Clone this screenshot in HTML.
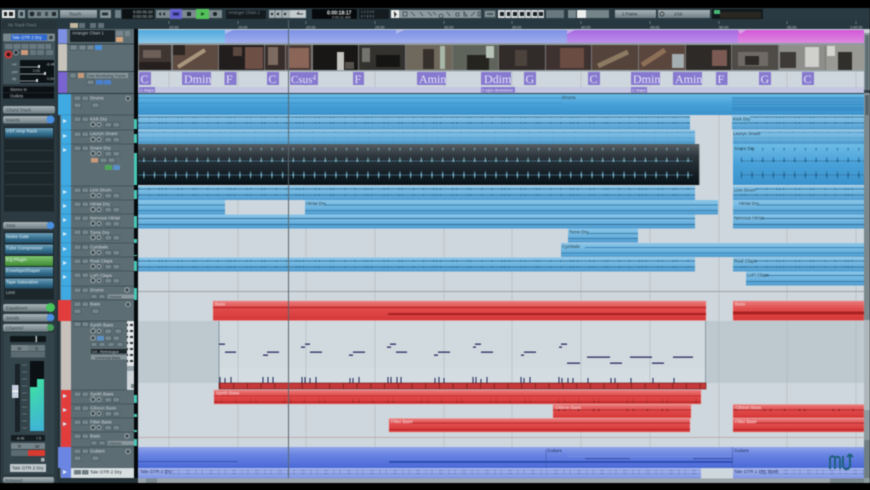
<!DOCTYPE html>
<html lang="en"><head><meta charset="utf-8"><title>Cubase</title>
<style>
html,body{margin:0;padding:0;background:#000;width:870px;height:490px;overflow:hidden}
svg{display:block;position:absolute;left:0;top:0;filter:blur(.45px)}
text{font-family:"Liberation Sans",sans-serif;font-size:4.6px;fill:#d5dcdf}
.d{fill:#26424f}.w{fill:#f2f5f5}.k{fill:#15242c}
.c{font-family:"Liberation Serif",serif;font-size:12px;fill:#e4e5f8}
.cb{fill:#8679cf}
.r{font-size:4.2px;fill:#b8c4c8}
.b{fill:#75868c;stroke:#2f3d43;stroke-width:.4}
.g{fill:#8a999e}
.n{fill:#2b2a60}
.v{fill:#26305e}
</style></head><body>
<svg width="870" height="490" viewBox="0 0 870 490" xmlns="http://www.w3.org/2000/svg">
<defs>
<linearGradient id="bl" x1="0" y1="0" x2="0" y2="1"><stop offset="0" stop-color="#8bc5e8"/><stop offset=".5" stop-color="#6fb5e0"/><stop offset="1" stop-color="#4f9cd0"/></linearGradient>
<linearGradient id="bd" x1="0" y1="0" x2="0" y2="1"><stop offset="0" stop-color="#6dbbe6"/><stop offset=".5" stop-color="#47a0d8"/><stop offset="1" stop-color="#3b93cd"/></linearGradient>
<linearGradient id="sn" x1="0" y1="0" x2="0" y2="1"><stop offset="0" stop-color="#565f64"/><stop offset=".3" stop-color="#2c363c"/><stop offset="1" stop-color="#071218"/></linearGradient>
<linearGradient id="rd" x1="0" y1="0" x2="0" y2="1"><stop offset="0" stop-color="#ea7c7c"/><stop offset=".4" stop-color="#e04c4c"/><stop offset="1" stop-color="#d63636"/></linearGradient>
<linearGradient id="gu" x1="0" y1="0" x2="0" y2="1"><stop offset="0" stop-color="#8fa3ea"/><stop offset=".35" stop-color="#6a85e2"/><stop offset="1" stop-color="#4a6ad6"/></linearGradient>
<linearGradient id="gu2" x1="0" y1="0" x2="0" y2="1"><stop offset="0" stop-color="#a9b8ee"/><stop offset="1" stop-color="#7f95e2"/></linearGradient>
<linearGradient id="btn" x1="0" y1="0" x2="0" y2="1"><stop offset="0" stop-color="#a8b3b7"/><stop offset="1" stop-color="#6f7e84"/></linearGradient>
<linearGradient id="slot" x1="0" y1="0" x2="0" y2="1"><stop offset="0" stop-color="#6f9fb7"/><stop offset=".5" stop-color="#3a7595"/><stop offset="1" stop-color="#1f4c66"/></linearGradient>
<linearGradient id="grn" x1="0" y1="0" x2="0" y2="1"><stop offset="0" stop-color="#7fc46f"/><stop offset="1" stop-color="#3d8a34"/></linearGradient>
<linearGradient id="meter" x1="0" y1="0" x2="0" y2="1"><stop offset="0" stop-color="#3fdca8"/><stop offset="1" stop-color="#3fb4d6"/></linearGradient>
<linearGradient id="arr0" x1="0" y1="0" x2="0" y2="1"><stop offset="0" stop-color="#4fa8dc"/><stop offset="1" stop-color="#8cc8ea"/></linearGradient>
<linearGradient id="arr1" x1="0" y1="0" x2="0" y2="1"><stop offset="0" stop-color="#7c90e6"/><stop offset="1" stop-color="#a2aeee"/></linearGradient>
<linearGradient id="arr2" x1="0" y1="0" x2="0" y2="1"><stop offset="0" stop-color="#a668e2"/><stop offset="1" stop-color="#bd90ea"/></linearGradient>
<linearGradient id="arr3" x1="0" y1="0" x2="0" y2="1"><stop offset="0" stop-color="#d456d8"/><stop offset="1" stop-color="#dd8ae0"/></linearGradient>
<pattern id="tk" width="68.6" height="6" patternUnits="userSpaceOnUse"><path d="M0 3H68.6" stroke="#28688f" stroke-width=".7"/><path d="M2 2v2M12 2v2M22 2v2M25 2v2M29 2v2M41 2v2M45 2v2M56 2v2M59 2v2" stroke="#2a6f9a" stroke-width=".7"/></pattern>
<pattern id="tk2" width="34.3" height="5" patternUnits="userSpaceOnUse"><path d="M0 2.500H34.3" stroke="#3a7fa8" stroke-width=".5"/><path d="M4 2v1M15 2v1M26 2v1" stroke="#2a6a92" stroke-width=".6"/></pattern>
<pattern id="wv" width="10.67" height="14" patternUnits="userSpaceOnUse"><path d="M0 7H10.67" stroke="#4f87a3" stroke-width=".6"/><path d="M4.400 7L5.200 2.500L6 7L5.200 11.500Z" fill="#85bfdb"/></pattern>
<pattern id="wvb" width="10.67" height="14" patternUnits="userSpaceOnUse"><path d="M0 7H10.67" stroke="#2d719a" stroke-width=".6"/><path d="M4.400 7L5.200 2.500L6 7L5.200 11.500Z" fill="#1e5c84"/></pattern>
<pattern id="rt" width="68.6" height="4" patternUnits="userSpaceOnUse"><path d="M0 2H68.6" stroke="#a52525" stroke-width=".8"/><path d="M10 1v2M16 1v2M30 1v2M45 1v2M50 1v2" stroke="#7d1a1a" stroke-width="1"/></pattern>
<pattern id="rb" width="13.72" height="6" patternUnits="userSpaceOnUse"><rect width="13.72" height="6" fill="#c43838"/><path d="M.3 0V6" stroke="#6a1616" stroke-width=".7"/></pattern>
<pattern id="piano" width="30" height="4" patternUnits="userSpaceOnUse"><path d="M0 .5H30M0 2.500H30" stroke="#c8d1d6" stroke-width=".4"/></pattern>
<pattern id="gt" width="23" height="4" patternUnits="userSpaceOnUse"><path d="M0 2H23" stroke="#4660b0" stroke-width=".5"/><path d="M3 1v2M5 1v2M12 1v2M18 1v2" stroke="#3a50a0" stroke-width=".7"/></pattern>
<pattern id="key" width="5" height="6" patternUnits="userSpaceOnUse"><rect width="5" height="6" fill="#e4e8ea"/><rect width="3" height="2" fill="#242a2e"/></pattern>
<g id="t"><rect class="b" x="74" y="2" width="7" height="4.500"/><rect class="b" x="82" y="2" width="6.500" height="4.500"/><circle cx="93" cy="9.500" r="2.200" fill="#3c4a50" stroke="#cfd6d8" stroke-width=".7"/><circle cx="99" cy="9.500" r="1.800" fill="#3c4a50" stroke="#cfd6d8" stroke-width=".6"/><rect class="b" x="105" y="7.500" width="6.500" height="4.500"/><rect class="b" x="113" y="7.500" width="6.500" height="4.500"/><path d="M63 4l4 2-4 2z" fill="#d6eefa"/></g>
<g id="f"><rect class="b" x="74" y="2" width="7" height="4.500"/><rect class="b" x="82" y="2" width="6.500" height="4.500"/><rect class="b" x="74" y="9" width="7" height="4.500"/><rect class="b" x="92" y="9" width="7" height="4.500"/><circle cx="128" cy="4.500" r="2.200" fill="#3c4a50" stroke="#cfd6d8" stroke-width=".7"/></g>
</defs>

<!-- base -->
<rect width="870" height="490" fill="#000"/>
<rect y="8" width="870" height="475" fill="#2c3a41"/>

<!-- toolbar -->
<rect y="8" width="870" height="12" fill="#2a3a42"/>
<rect x="2" y="10" width="13" height="8" fill="#e8ecec"/><rect x="4" y="12" width="3" height="4" fill="#222"/><rect x="9" y="12" width="4" height="4" fill="#222"/>
<rect x="18" y="10" width="7" height="8" fill="#8b9a9f"/><rect x="20" y="12" width="3" height="4" fill="#28353a"/>
<rect x="28" y="10" width="30" height="8" fill="#78878c"/><circle cx="32" cy="14" r="2.400" fill="#20292d"/><rect x="37" y="12" width="4" height="4" fill="#3a474c"/><rect x="45" y="12" width="3" height="4" fill="#3a474c"/><rect x="52" y="12" width="4" height="4" fill="#20292d"/>
<rect x="60" y="10" width="37" height="8" fill="url(#btn)"/><text x="69" y="15.500" style="fill:#2c3a41">Touch</text>
<rect x="100" y="10" width="11" height="8" fill="#87959a"/><rect x="102" y="12.500" width="6" height="3" fill="#28353a"/>
<rect x="115" y="10" width="6" height="8" fill="#6f8088"/>
<rect x="122" y="9" width="32" height="10" fill="#0c1214"/>
<text x="133" y="13.500" class="r">0:00:00.00</text><text x="133" y="18" class="r">0:00:00.00</text>
<rect x="156" y="10" width="14" height="8" fill="#7c8a8f"/><path d="M161 12v4l-2.500-2zM165 12v4l-2.500-2z" fill="#20292d"/>
<rect x="170" y="9" width="12" height="10" fill="#6462cc"/><rect x="173" y="12.500" width="6" height="3" fill="#2a2a70"/>
<rect x="182" y="10" width="14" height="8" fill="#7c8a8f"/><rect x="187" y="12" width="4" height="4" fill="#1a2226"/>
<rect x="196" y="9" width="13" height="10" fill="#53c25a"/><path d="M201 12l4 2-4 2z" fill="#1d5a26"/>
<rect x="209" y="10" width="13" height="8" fill="#7c8a8f"/><circle cx="215" cy="14" r="2" fill="#1a2226"/>
<rect x="226" y="10" width="40" height="9" fill="#141c20"/><text x="228" y="14" class="r" style="fill:#75858b">Arranger Chain 1</text>
<rect x="269" y="10" width="21" height="8" fill="#a1acb0"/><path d="M275 10v8M282 10v8" stroke="#40505a" stroke-width=".5"/><rect x="271" y="13" width="2" height="2" fill="#222"/><rect x="277" y="13" width="2" height="2" fill="#222"/><rect x="284" y="13" width="2" height="2" fill="#222"/>
<rect x="290" y="10" width="16" height="8" fill="#c2cacd"/><path d="M297 14h6M297 14l2-2" stroke="#222" stroke-width=".8" fill="none"/>
<rect x="312" y="9" width="45" height="10" fill="#060a0c"/><text x="327" y="14.500" style="fill:#eef2f2;font-size:5px;font-weight:bold">0:00:18:17</text><text x="332" y="18.500" class="r" style="font-size:3.600px">0:00:11.400</text>
<rect x="359" y="9" width="30" height="10" fill="#141c20"/><text x="361" y="13" class="r" style="fill:#8a999e;font-size:3.400px">1 2 3 4 5</text><text x="361" y="17.500" class="r" style="fill:#8a999e;font-size:3.400px">6 7 8 9 0</text>
<rect x="391" y="10" width="8" height="8" fill="#eef0f0"/><path d="M394 11l3 4-1.500 0 0 2-1 0z" fill="#111"/>
<rect x="399" y="10" width="82" height="8" fill="#8d9ba0"/>
<path d="M403 12h4v4h-4zM411 12l4 4M420 12l3 4M428 12l4 4M433 12l3 3M441 14a2 2 0 1 0 .1 0M447 12l3 4M456 13h3v3h-3zM464 12v4h3zM471 16l4-4M478 12h2v4h-2z" stroke="#3d4a50" fill="none" stroke-width=".8"/>
<rect x="484" y="10" width="12" height="8" fill="#536268"/><rect x="486" y="12" width="8" height="4" fill="none" stroke="#d6dcde" stroke-width=".6"/>
<rect x="498" y="10" width="46" height="8" fill="#d8dddf"/><path d="M505 10v8M511 10v8M518 10v8M525 10v8M531 10v8M538 10v8" stroke="#38454b" stroke-width=".5"/><path d="M500 12h4v4h-4zM507 12h3v4h-3zM513 12h4v4h-4zM520 12h4v4h-4zM527 12h3v4h-3zM533 12h4v4h-4zM539 12h4v4h-4z" fill="#191f22"/>
<rect x="546" y="10" width="18" height="8" fill="#69787e"/>
<rect x="568" y="10" width="8" height="8" fill="#7a898e"/>
<rect x="577" y="10" width="9" height="8" fill="#eef0f0"/>
<rect x="586" y="10" width="23" height="8" fill="#758489"/>
<rect x="615" y="10" width="41" height="8" fill="url(#btn)"/><text x="622" y="15.500" style="fill:#1f2a30;font-size:4.200px">1 Frame</text>
<rect x="658" y="10" width="52" height="8" fill="url(#btn)"/><circle cx="662" cy="14" r="2" fill="none" stroke="#222" stroke-width=".7"/><text x="674" y="15.500" style="fill:#1f2a30;font-size:4.200px">1/16</text>
<rect x="712" y="9" width="51" height="10" fill="#12191c"/><rect x="714" y="10" width="6" height="4" fill="#46b878"/><rect x="720" y="12" width="41" height="6" fill="#2a2620"/>

<!-- ruler -->
<rect y="20" width="870" height="9" fill="#283840"/>
<rect x="0" y="20" width="57" height="9" fill="#27353b"/>
<text x="8" y="26.500" class="r" style="fill:#7c8c92">No Track Fixed</text>
<rect x="70" y="23" width="8" height="5" fill="#c3b89f"/><rect x="79" y="23" width="6" height="5" fill="#607178"/><rect x="90" y="23" width="6" height="5" fill="#607178"/><rect x="98" y="23" width="6" height="5" fill="#607178"/>
<text x="169" y="28.500" class="r" style="font-size:3.800px">10:00</text><text x="238" y="28.500" class="r" style="font-size:3.800px">15:00</text><text x="306" y="28.500" class="r" style="font-size:3.800px">20:00</text><text x="375" y="28.500" class="r" style="font-size:3.800px">25:00</text><text x="444" y="28.500" class="r" style="font-size:3.800px">30:00</text><text x="512" y="28.500" class="r" style="font-size:3.800px">35:00</text><text x="581" y="28.500" class="r" style="font-size:3.800px">40:00</text><text x="650" y="28.500" class="r" style="font-size:3.800px">45:00</text><text x="719" y="28.500" class="r" style="font-size:3.800px">50:00</text><text x="787" y="28.500" class="r" style="font-size:3.800px">55:00</text><text x="850" y="28.500" class="r" style="font-size:3.800px">1:00:00</text>
<path d="M169 21v3M238 21v3M306 21v3M375 21v3M444 21v3M512 21v3M581 21v3M650 21v3M719 21v3M787 21v3M856 21v3" stroke="#a5b2b7" stroke-width=".5"/>

<!-- arrange background -->
<rect x="138" y="29" width="726" height="450" fill="#ced7dd"/>
<path d="M169 71V447M238 71V447M306 71V447M375 71V447M444 71V447M512 71V447M581 71V447M650 71V447M719 71V447M787 71V447M856 71V447" stroke="#b4bec4" stroke-width=".7"/>

<!-- arranger -->
<rect x="138" y="30" width="87" height="13" fill="url(#arr0)"/>
<rect x="225" y="30" width="342" height="13" fill="url(#arr1)"/>
<rect x="567" y="30" width="171" height="13" fill="url(#arr2)"/>
<rect x="738" y="30" width="126" height="13" fill="url(#arr3)"/>
<path d="M225 30h8l-8 4zM396 30h8l-8 4zM567 30h8l-8 4zM738 30h8l-6 4z" fill="#d6d8f2" opacity=".55"/>
<rect x="138" y="43" width="726" height="2" fill="#8f9ca2"/>

<!-- video -->
<rect x="138" y="45" width="726" height="25" fill="#777"/>
<rect x="139" y="45" width="32" height="25" fill="#3f3632"/><rect x="143" y="50" width="18" height="8" fill="#6d5f58"/><rect x="139" y="62" width="32" height="8" fill="#251f1e"/>
<rect x="173" y="45" width="45" height="25" fill="#5d4a40"/><path d="M178 67L205 50" stroke="#a8967c" stroke-width="4"/><rect x="173" y="45" width="12" height="10" fill="#2c2522"/>
<rect x="219" y="45" width="45" height="25" fill="#221e1d"/><rect x="245" y="47" width="18" height="22" fill="#6e4f46"/><rect x="233" y="47" width="9" height="9" fill="#5a4740"/>
<rect x="265" y="45" width="20" height="25" fill="#382d2a"/><rect x="268" y="47" width="10" height="18" fill="#7d6a60"/>
<rect x="286" y="45" width="25" height="25" fill="#4a3a34"/><rect x="289" y="48" width="20" height="20" fill="#8a6558"/>
<rect x="313" y="45" width="45" height="25" fill="#181716"/><rect x="337" y="52" width="7" height="18" fill="#c4c4c0"/><rect x="345" y="62" width="9" height="7" fill="#55504c"/>
<rect x="359" y="45" width="46" height="25" fill="#33322f"/><rect x="362" y="48" width="8" height="14" fill="#74746e"/><rect x="376" y="55" width="24" height="12" fill="#151514"/>
<rect x="406" y="45" width="46" height="25" fill="#6f685c"/><rect x="423" y="49" width="11" height="20" fill="#35302c"/><rect x="440" y="46" width="5" height="23" fill="#a8b8a8"/>
<rect x="453" y="45" width="45" height="25" fill="#5f645a"/><rect x="467" y="55" width="22" height="15" fill="#26241f"/><rect x="486" y="46" width="8" height="12" fill="#b8c4b8"/>
<rect x="499" y="45" width="46" height="25" fill="#312c2a"/><rect x="515" y="50" width="12" height="16" fill="#4d433d"/>
<rect x="546" y="45" width="45" height="25" fill="#3e3230"/><rect x="560" y="48" width="24" height="20" fill="#6a4c42"/>
<rect x="592" y="45" width="46" height="25" fill="#53433a"/><path d="M598 66L628 52" stroke="#8d7a62" stroke-width="5"/>
<rect x="639" y="45" width="46" height="25" fill="#5b463e"/><rect x="672" y="54" width="12" height="14" fill="#a5aeb0"/><path d="M642 65L665 50" stroke="#8e7058" stroke-width="5"/>
<rect x="686" y="45" width="45" height="25" fill="#2e2a28"/><rect x="712" y="50" width="15" height="16" fill="#7a5a52"/>
<rect x="732" y="45" width="46" height="25" fill="#4f4c48"/><rect x="738" y="52" width="30" height="14" fill="#6f6a66"/><rect x="745" y="56" width="14" height="9" fill="#2d2a28"/>
<rect x="779" y="45" width="46" height="25" fill="#8e8e8a"/><rect x="780" y="52" width="16" height="16" fill="#3d3a38"/><rect x="805" y="47" width="14" height="20" fill="#d0d0cc"/>
<rect x="826" y="45" width="38" height="25" fill="#9a9a94"/><rect x="838" y="52" width="14" height="18" fill="#312f2c"/><rect x="827" y="46" width="8" height="10" fill="#d5d5d0"/>

<!-- chord lane -->
<rect x="138" y="70" width="726" height="1.500" fill="#9aa6ac"/>
<rect x="138" y="87" width="726" height="6" fill="#c4c6e2"/>
<rect x="138" y="93" width="726" height="1.200" fill="#28404c"/>
<rect class="cb" x="139" y="72" width="12" height="13"/><text class="c" x="140.500" y="83">C</text>
<rect class="cb" x="182" y="72" width="29" height="13"/><text class="c" x="184" y="83">Dmin</text>
<rect class="cb" x="224.500" y="72" width="12" height="13"/><text class="c" x="226" y="83">F</text>
<rect class="cb" x="267" y="72" width="12" height="13"/><text class="c" x="268.500" y="83">C</text>
<rect class="cb" x="290" y="72" width="28" height="13"/><text class="c" x="291" y="83" style="font-size:11px">Csus<tspan dy="-3" style="font-size:7px">4</tspan></text>
<rect class="cb" x="353" y="72" width="11" height="13"/><text class="c" x="354.500" y="83">F</text>
<rect class="cb" x="417" y="72" width="29" height="13"/><text class="c" x="419" y="83">Amin</text>
<rect class="cb" x="481" y="72" width="30" height="13"/><text class="c" x="484" y="83">Ddim</text>
<rect class="cb" x="524" y="72" width="12" height="13"/><text class="c" x="525.500" y="83">G</text>
<rect class="cb" x="588" y="72" width="12" height="13"/><text class="c" x="589.500" y="83">C</text>
<rect class="cb" x="631" y="72" width="29" height="13"/><text class="c" x="633" y="83">Dmin</text>
<rect class="cb" x="673" y="72" width="29" height="13"/><text class="c" x="675" y="83">Amin</text>
<rect class="cb" x="716" y="72" width="11.500" height="13"/><text class="c" x="717.500" y="83">F</text>
<rect class="cb" x="759" y="72" width="12" height="13"/><text class="c" x="760.500" y="83">G</text>
<rect class="cb" x="802" y="72" width="12" height="13"/><text class="c" x="803.500" y="83">C</text>
<rect class="cb" x="139" y="87" width="16" height="5.500"/><text x="140" y="91.500" style="font-size:4px;fill:#eee">C Major</text>
<rect class="cb" x="481" y="87" width="34" height="5.500"/><text x="482" y="91.500" style="font-size:3.800px;fill:#eee">F sqhz diminished</text>
<rect class="cb" x="631" y="87" width="16" height="5.500"/><text x="632" y="91.500" style="font-size:4px;fill:#eee">C Major</text>

<!-- blue events -->
<rect x="138" y="94" width="726" height="21" fill="url(#bd)"/>
<path d="M138 98H562M138 103H562M138 109H562" stroke="#3d96cf" stroke-width="1"/>
<rect x="732" y="97" width="132" height="14" fill="#2f85bf" opacity=".55"/>
<text x="562" y="99" class="d">Drums</text>
<path d="M732 100H864M732 103H864M732 106H864" stroke="#58a8d8" stroke-width=".7"/>

<g id="ev">
<rect x="138" y="115.500" width="552" height="14" fill="url(#bl)"/><rect x="138" y="116.500" width="552" height="6" fill="url(#tk)"/><rect x="138" y="122.500" width="552" height="6" fill="url(#tk)"/>
<rect x="732" y="115.500" width="132" height="14" fill="url(#bl)"/><rect x="750" y="116.500" width="114" height="6" fill="url(#tk)"/><rect x="732" y="122.500" width="132" height="6" fill="url(#tk)"/><text x="733" y="120.500" class="d">Kick Dry</text>
<rect x="138" y="130" width="557" height="14" fill="url(#bl)"/><rect x="138" y="131" width="557" height="5" fill="url(#tk2)"/><rect x="138" y="137.500" width="557" height="5" fill="url(#tk2)"/>
<rect x="733" y="130" width="131" height="14" fill="url(#bl)"/><rect x="758" y="131" width="106" height="5" fill="url(#tk2)"/><rect x="733" y="137.500" width="131" height="5" fill="url(#tk2)"/><text x="733" y="135" class="d">Lauryn Snare</text>
<rect x="138" y="144" width="562" height="41" fill="url(#sn)"/><rect x="138" y="148" width="555" height="14" fill="url(#wv)"/><rect x="138" y="168" width="555" height="14" fill="url(#wv)"/>
<path d="M699.500 144V185" stroke="#c0c8cc" stroke-width=".8"/>
<rect x="733" y="144" width="131" height="41" fill="url(#bd)"/><rect x="741" y="148" width="123" height="14" fill="url(#wvb)"/><rect x="741" y="168" width="123" height="14" fill="url(#wvb)"/><text x="734" y="150" class="d">Snare Dry</text>
<rect x="138" y="186" width="557" height="14" fill="url(#bl)"/><rect x="138" y="187" width="557" height="6" fill="url(#tk)"/><rect x="138" y="193" width="557" height="6" fill="url(#tk)"/>
<rect x="733" y="186" width="131" height="14" fill="url(#bl)"/><rect x="755" y="187" width="109" height="6" fill="url(#tk)"/><rect x="733" y="193" width="131" height="6" fill="url(#tk)"/><text x="734" y="191.500" class="d">Linn Drum</text>
<rect x="138" y="200" width="87" height="14.500" fill="url(#bl)"/><rect x="305" y="200" width="413" height="14.500" fill="url(#bl)"/><rect x="733" y="200" width="131" height="14.500" fill="url(#bl)"/>
<path d="M138 205H225M138 210.500H225M325 205H718M305 210.500H718M758 205H864M733 210.500H864" stroke="#3a82ad" stroke-width=".9"/><text x="306" y="205" class="d">HiHat Dry</text><text x="739" y="205" class="d">HiHat Dry</text>
<rect x="138" y="214.500" width="557" height="14" fill="url(#bl)"/><rect x="733" y="214.500" width="131" height="14" fill="url(#bl)"/>
<path d="M138 218.500H695M138 224.500H695M762 218.500H864M733 224.500H864" stroke="#1f5e86" stroke-width=".8"/><text x="734" y="219.500" class="d">Nervous HiHat</text>
<rect x="568" y="228.500" width="70" height="14" fill="url(#bl)"/><path d="M587 233.500H638M568 238.500H638" stroke="#2a6c95" stroke-width=".8"/><text x="569" y="233.500" class="d">Toms Dry</text>
<rect x="561" y="243" width="303" height="14" fill="url(#bl)"/><path d="M585 247.500H864M561 253H864" stroke="#3a88b8" stroke-width="1"/><text x="562" y="248" class="d">Cymbals</text>
<rect x="138" y="257.500" width="557" height="14" fill="url(#bl)"/><rect x="138" y="258.500" width="557" height="6" fill="url(#tk)"/><rect x="138" y="264.500" width="557" height="6" fill="url(#tk)"/>
<rect x="733" y="257.500" width="131" height="14" fill="url(#bl)"/><rect x="755" y="258.500" width="109" height="6" fill="url(#tk)"/><rect x="733" y="264.500" width="131" height="6" fill="url(#tk)"/><text x="734" y="262.500" class="d">Real Claps</text>
<rect x="746" y="271.500" width="118" height="14" fill="url(#bl)"/><path d="M765 275.500H864M746 281.500H864" stroke="#2a6c95" stroke-width=".8"/><text x="747" y="276.500" class="d">LoFi Claps</text>
</g>
<rect x="138" y="291" width="726" height="1" fill="#9aa4aa"/>

<!-- red -->
<rect x="213" y="301" width="493" height="19.500" fill="url(#rd)" stroke="#ee9b9b" stroke-width=".5"/>
<path d="M213 307.500H706" stroke="#c63030" stroke-width="2"/><rect x="388" y="313" width="318" height="2" fill="#a82020"/>
<text x="215" y="305.500" style="fill:#f5dede">Bass</text>
<rect x="733" y="301" width="131" height="19.500" fill="url(#rd)" stroke="#ee9b9b" stroke-width=".5"/><rect x="733" y="311.500" width="131" height="3" fill="#a82020"/><text x="735" y="305.500" style="fill:#f5dede">Bass</text>

<!-- piano lane -->
<rect x="138" y="321" width="81" height="62" fill="#bdc9ce"/><rect x="706" y="321" width="158" height="62" fill="#bdc9ce"/>
<rect x="219" y="321" width="487" height="62" fill="#d3dce1"/><rect x="219" y="321" width="487" height="46" fill="url(#piano)"/>
<path d="M169 321V383M238 321V383M306 321V383M375 321V383M444 321V383M512 321V383M581 321V383M650 321V383M719 321V383M787 321V383M856 321V383" stroke="#b2bcc2" stroke-width=".7"/>
<path d="M219 321V383M705.500 321V383" stroke="#6d7f8a" stroke-width=".7"/>
<g class="n">
<rect x="219" y="343.500" width="6" height="1.300"/><rect x="225" y="351.500" width="11" height="1.300"/><rect x="263" y="354.500" width="5" height="1.300"/><rect x="267" y="351.500" width="12" height="1.300"/>
<rect x="301" y="346.500" width="4" height="1.300"/><rect x="305" y="343.500" width="5" height="1.300"/><rect x="310" y="351.500" width="12" height="1.300"/><rect x="349" y="354.500" width="4" height="1.300"/><rect x="353" y="351.500" width="12" height="1.300"/>
<rect x="387" y="346.500" width="4" height="1.300"/><rect x="390" y="343.500" width="6" height="1.300"/><rect x="396" y="351.500" width="11" height="1.300"/><rect x="434" y="354.500" width="4" height="1.300"/><rect x="438" y="351.500" width="12" height="1.300"/>
<rect x="473" y="346.500" width="3" height="1.300"/><rect x="475" y="343.500" width="6" height="1.300"/><rect x="481" y="351.500" width="12" height="1.300"/><rect x="521" y="354.500" width="3" height="1.300"/><rect x="524" y="351.500" width="12" height="1.300"/>
<rect x="559" y="346.500" width="3" height="1.300"/><rect x="561" y="343.500" width="6" height="1.300"/><rect x="567" y="362.500" width="13" height="1.300"/><rect x="587" y="356.500" width="23" height="1.300"/><rect x="610" y="362.500" width="12" height="1.300"/><rect x="630" y="356.500" width="22" height="1.300"/><rect x="652" y="362.500" width="12" height="1.300"/><rect x="673" y="356.500" width="20" height="1.300"/>
</g>
<path d="M220 383v-6M225 383v-5M231 383v-6M263 383v-6M268 383v-6M273 383v-6M302 383v-6M305 383v-6M310 383v-5M316 383v-6M350 383v-5M353 383v-5M359 383v-6M388 383v-6M391 383v-6M397 383v-6M401 383v-6M435 383v-5M439 383v-6M444 383v-5M473 383v-6M476 383v-6M481 383v-4M487 383v-6M521 383v-6M524 383v-5M530 383v-6M559 383v-6M562 383v-5M568 383v-5M573 383v-5M588 383v-5M611 383v-5M615 383v-5M631 383v-5M653 383v-5M674 383v-5" stroke="#26305e" stroke-width="1.100"/>
<rect x="219" y="383" width="487" height="6" fill="url(#rb)"/><rect x="219" y="383" width="487" height="6" fill="none" stroke="#6a1616" stroke-width=".6"/>

<!-- red lower -->
<rect x="214" y="390" width="487" height="14" fill="url(#rd)" stroke="#ee9b9b" stroke-width=".4"/><path d="M214 396H701" stroke="#c63030" stroke-width="1"/><rect x="214" y="398.500" width="487" height="4" fill="url(#rt)"/><text x="216" y="394.500" style="fill:#f5dede">Synth Bass</text>
<rect x="553" y="404.500" width="138" height="13.500" fill="url(#rd)" stroke="#ee9b9b" stroke-width=".4"/><rect x="553" y="409" width="138" height="4" fill="url(#rt)"/><text x="555" y="409" style="fill:#f5dede">Gibson Bass</text>
<rect x="733" y="404.500" width="131" height="13.500" fill="url(#rd)" stroke="#ee9b9b" stroke-width=".4"/><rect x="733" y="409" width="131" height="4" fill="url(#rt)"/><text x="735" y="409" style="fill:#f5dede">Gibson Bass</text>
<rect x="389" y="418.500" width="301" height="13.500" fill="url(#rd)" stroke="#ee9b9b" stroke-width=".4"/><path d="M410 423H690M389 429.500H690" stroke="#a82020" stroke-width=".8"/><text x="391" y="423" style="fill:#f5dede">Filter Bass</text>
<rect x="733" y="418.500" width="131" height="13.500" fill="url(#rd)" stroke="#ee9b9b" stroke-width=".4"/><path d="M755 423H864M733 429.500H864" stroke="#a82020" stroke-width=".8"/><text x="735" y="423" style="fill:#f5dede">Filter Bass</text>
<rect x="138" y="437" width="726" height=".8" fill="#b9a7a2"/>

<!-- guitars -->
<rect x="138" y="447" width="726" height="21" fill="url(#gu)"/>
<rect x="389" y="461" width="344" height="1.800" fill="#2c4bb0"/><rect x="138" y="461" width="100" height="1" fill="#3a56b0"/><rect x="585" y="458" width="45" height="1.200" fill="#3a56b0"/><rect x="693" y="458" width="40" height="1.200" fill="#3a56b0"/>
<path d="M546 449V468M732.500 447V468" stroke="#3a50a0" stroke-width=".5"/><text x="547" y="452" style="fill:#26305e">Guitars</text><text x="734" y="452" style="fill:#26305e">Guitars</text>
<path d="M567 451H732M567 454H732M567 456.500H732" stroke="#7a90de" stroke-width=".8"/>
<rect x="138" y="468" width="563" height="10.500" fill="url(#gu2)"/><rect x="733" y="468" width="131" height="10.500" fill="url(#gu2)"/>
<rect x="165" y="470" width="536" height="4" fill="url(#gt)"/><rect x="760" y="470" width="104" height="4" fill="url(#gt)"/>
<text x="140" y="473" style="fill:#26305e">Tale GTR 2 Dry</text><text x="734" y="473" style="fill:#26305e">Tale GTR 1 Dry, Bush</text>

<!-- scroll bottom -->
<rect x="138" y="478.500" width="726" height="4.500" fill="#9aa4a8"/><rect x="146" y="478.500" width="11" height="4.500" fill="#7c898e"/><rect x="830" y="478.500" width="34" height="4.500" fill="#788589"/>
<!-- right scrollbar -->
<rect x="864" y="29" width="6" height="454" fill="#8d9a9f"/>
<rect x="864" y="29" width="6" height="4" fill="#c8d0d3"/><rect x="865" y="35" width="4" height="55" fill="#5f6e74"/><rect x="864" y="90" width="6" height="3" fill="#333f44"/><rect x="865" y="95" width="4" height="20" fill="#55646a"/><rect x="864" y="115" width="6" height="205" fill="#7b888d"/><rect x="864" y="320" width="6" height="90" fill="#aeb8bc"/><rect x="864" y="440" width="6" height="38" fill="#6f7e83"/>
<!-- playhead -->
<path d="M288.500 20V478" stroke="#59666c" stroke-width="1"/>
<!-- logo -->
<path d="M830 469V458.500c0-3 5-3 5 0V469M835 459c0-3 5-3 5 0V469M843 456V466c0 4 7 4 7 0V454M850 454l-3 3M850 454l3 3" fill="none" stroke="#1d5f78" stroke-width="1.900"/>

<!-- left panels -->
<rect x="57" y="29" width="77" height="454" fill="#5c6d74"/>
<rect x="134" y="29" width="4" height="454" fill="#050a0c"/>
<rect x="57" y="29" width="3" height="454" fill="#253238"/>
<!-- Arranger -->
<rect x="58" y="29" width="9" height="15" fill="#7e90e4"/><rect x="67" y="29" width="67" height="15" fill="#5c6d74"/>
<rect x="70" y="30" width="45" height="12" fill="#1a2328"/><text x="72" y="34.500" class="r">Arranger Chain 1</text>
<rect x="116" y="31" width="7" height="5" fill="#76868c"/><rect x="125" y="31" width="5" height="5" fill="#76868c"/><rect x="116" y="37" width="7" height="5" fill="#d8a67c"/>
<rect y="43.500" x="58" width="76" height="1" fill="#2f3d43"/>
<!-- video -->
<rect x="58" y="44" width="9" height="27" fill="#c8c4bc"/>
<rect x="70" y="45" width="7" height="5" class="b"/><rect x="79" y="45" width="7" height="5" class="b"/><rect x="87" y="45" width="7" height="5" class="b"/><rect x="95" y="45" width="7" height="5" fill="#4a90d8"/>
<rect x="58" y="71" width="76" height="1" fill="#2f3d43"/>
<!-- chord -->
<rect x="58" y="72" width="9" height="21" fill="#7964d2"/>
<rect x="70" y="73" width="6" height="5" class="b"/><rect x="78" y="73" width="6" height="5" fill="#c89a78"/><rect x="87" y="73" width="41" height="5" fill="#87969b"/><text x="88" y="77.200" style="fill:#26323a;font-size:3.800px">Use Monitoring Tracks</text>
<rect x="87" y="80" width="7" height="4.500" class="b"/><rect x="96" y="80" width="7" height="4.500" fill="#4a80d0"/><rect x="104" y="80" width="7" height="4.500" fill="#4a80d0"/>
<rect x="58" y="93" width="76" height="1" fill="#2a383e"/>

<!-- tracks -->
<rect x="58" y="94" width="13" height="21" fill="#3fa9e2"/><g transform="translate(0,94)"><use href="#f"/></g><text x="90" y="99.500">Drums</text>
<rect x="61" y="115" width="10" height="71" fill="#3fa9e2"/><rect x="61" y="186" width="10" height="114" fill="#3fa9e2"/>
<g transform="translate(0,115)"><use href="#t"/></g><text x="90" y="120.500">Kick Dry</text>
<g transform="translate(0,130)"><use href="#t"/></g><text x="90" y="135">Lauryn Snare</text>
<g transform="translate(0,144)"><use href="#t"/></g><text x="90" y="149.500">Snare Dry</text>
<rect x="91" y="158" width="7" height="4.500" fill="#cc9a7a"/><rect x="100" y="158" width="7" height="4.500" class="b"/><rect x="108" y="158" width="7" height="4.500" class="b"/>
<rect x="105" y="165" width="7" height="5" fill="#4fa65a"/><rect x="113" y="165" width="7" height="5" fill="#5b8fc8"/>
<g transform="translate(0,186)"><use href="#t"/></g><text x="90" y="191.500">Linn Drum</text>
<g transform="translate(0,200)"><use href="#t"/></g><text x="90" y="205.500">HiHat Dry</text>
<g transform="translate(0,214)"><use href="#t"/></g><text x="90" y="219.500">Nervous HiHat</text>
<g transform="translate(0,228)"><use href="#t"/></g><text x="90" y="234">Toms Dry</text>
<g transform="translate(0,243)"><use href="#t"/></g><text x="90" y="248.500">Cymbals</text>
<g transform="translate(0,257)"><use href="#t"/></g><text x="90" y="262.500">Real Claps</text>
<g transform="translate(0,271)"><use href="#t"/></g><text x="90" y="277">LoFi Claps</text>
<rect class="b" x="74" y="288" width="7" height="4.500"/><rect class="b" x="82" y="288" width="6.500" height="4.500"/><text x="90" y="291.500">Drums</text><circle cx="127" cy="290" r="2.200" fill="#3c4a50" stroke="#cfd6d8" stroke-width=".7"/>
<rect class="b" x="91" y="294.500" width="6" height="4"/><rect class="b" x="99" y="294.500" width="6" height="4"/><rect x="108" y="294.500" width="26" height="4" fill="#8a989d"/><text x="109" y="298" style="fill:#222e34;font-size:3.800px">Volume</text>
<path d="M61 115H71M61 130H71M61 144H71M61 186H71M61 200H71M61 214H71M61 228H71M61 243H71M61 257H71M61 271H71M61 286H71" stroke="#2e7fb0" stroke-width=".5"/>
<path d="M71 115H134M71 130H134M71 144H134M71 186H134M71 200H134M71 214H134M71 228H134M71 243H134M71 257H134M71 271H134M71 286H134M71 300H134M71 321H134M71 390H134M71 404H134M71 418H134M71 432H134M71 447H134M71 468H134" stroke="#3d4c52" stroke-width=".7"/>
<!-- meters -->
<g fill="#48c8b6"><rect x="134" y="119" width="3" height="10"/><rect x="134" y="134" width="3" height="9"/><rect x="134" y="153" width="3" height="32"/><rect x="134" y="190" width="3" height="9"/><rect x="134" y="216" width="3" height="12"/><rect x="134" y="239" width="3" height="4"/><rect x="134" y="255" width="3" height="1"/><rect x="134" y="261" width="3" height="10"/><rect x="134" y="288" width="3" height="12"/><rect x="134" y="395" width="3" height="8"/><rect x="134" y="414" width="3" height="3"/><rect x="134" y="430" width="3" height="2"/><rect x="134" y="439" width="3" height="7"/></g>

<!-- bass -->
<rect x="58" y="300" width="13" height="21" fill="#e23d3d"/><g transform="translate(0,300)"><use href="#f"/></g><text x="90" y="305.500">Bass</text>
<!-- synth bass -->
<rect x="61" y="321" width="10" height="69" fill="#c8c0ba"/>
<rect class="b" x="74" y="322" width="7" height="4.500"/><rect class="b" x="82" y="322" width="6.500" height="4.500"/><text x="90" y="326.500">Synth Bass</text>
<circle cx="93" cy="331" r="2.200" fill="#3c4a50" stroke="#cfd6d8" stroke-width=".7"/><circle cx="99" cy="331" r="1.800" fill="#3c4a50" stroke="#cfd6d8" stroke-width=".6"/><rect class="b" x="105" y="329" width="6.500" height="4.500"/><rect class="b" x="115" y="329" width="6.500" height="4.500"/>
<circle cx="93" cy="338" r="2.200" fill="#3c4a50" stroke="#cfd6d8" stroke-width=".7"/><rect x="97" y="336" width="7" height="4.500" fill="#5b8fc8"/><rect class="b" x="105" y="336" width="6.500" height="4.500"/><rect class="b" x="113" y="336" width="6.500" height="4.500"/>
<rect class="b" x="91" y="342.500" width="6" height="4"/><rect class="b" x="99" y="342.500" width="6" height="4"/><rect class="b" x="108" y="342.500" width="6" height="4"/><rect class="b" x="117" y="342.500" width="6" height="4"/>
<rect x="91" y="349" width="36" height="4.500" fill="#1b2529"/><text x="92" y="352.800" style="font-size:3.800px">C4 - Retrologue</text>
<rect x="91" y="355" width="36" height="4.500" fill="#87969b"/><text x="95" y="358.800" style="fill:#1c272c;font-size:3.800px">Universal Bass</text>
<rect x="127" y="321" width="7" height="45" fill="url(#key)"/>
<rect x="127" y="366" width="7" height="24" fill="#cfd6d9"/><rect x="127" y="366" width="7" height="5" fill="#96a3a8"/><rect x="131" y="384" width="3" height="4" fill="#78878c"/>
<!-- red tracks -->
<rect x="61" y="390" width="10" height="57" fill="#e23d3d"/>
<g transform="translate(0,390)"><use href="#t"/></g><text x="90" y="395.500">Synth Bass</text>
<g transform="translate(0,404)"><use href="#t"/></g><text x="90" y="409.500" style="fill:#c6cdd0">Gibson Bass</text>
<g transform="translate(0,418)"><use href="#t"/></g><text x="90" y="423.500">Filter Bass</text>
<rect class="b" x="74" y="434" width="7" height="4.500"/><rect class="b" x="82" y="434" width="6.500" height="4.500"/><text x="90" y="437.500">Bass</text><circle cx="127" cy="436" r="2.200" fill="#3c4a50" stroke="#cfd6d8" stroke-width=".7"/>
<rect class="b" x="91" y="441" width="6" height="4"/><rect class="b" x="99" y="441" width="6" height="4"/><rect x="108" y="441" width="26" height="4" fill="#8a989d"/><text x="109" y="444.500" style="fill:#222e34;font-size:3.800px">Volume</text>
<!-- guitars -->
<rect x="58" y="447" width="13" height="21" fill="#6a86e2"/><g transform="translate(0,447)"><use href="#f"/></g><text x="90" y="452.500">Guitars</text>
<rect x="61" y="468" width="10" height="10" fill="#6a86e2"/><rect x="71" y="468" width="63" height="10" fill="#d8dfe1"/>
<rect x="74" y="470" width="7" height="4.500" fill="#6d7c82"/><rect x="82" y="470" width="6.500" height="4.500" fill="#6d7c82"/><text x="90" y="473.500" style="fill:#1f2a30">Tale GTR 2 Dry</text>
<path d="M63 470l4 2-4 2z" fill="#e8f0fa"/>
<rect x="57" y="478" width="81" height="5" fill="#253238"/>

<!-- inspector -->
<rect width="57" height="454" y="29" fill="#2c3a41"/>
<rect x="3" y="33.500" width="52" height="8" rx="1" fill="#77868b"/><rect x="11" y="34.500" width="36" height="6" fill="#2f68d0"/><text x="12" y="39" style="fill:#e8eef8;font-size:4.300px">Tale GTR 2 Dry</text><circle cx="51" cy="37.500" r="2.500" fill="#3b484e" stroke="#b8c2c6" stroke-width=".5"/>
<rect x="3" y="42" width="52" height="42" rx="1" fill="#44555c"/>
<rect x="5" y="44" width="46" height="5" fill="#69797f"/><path d="M13 44v5M21 44v5M29 44v5M37 44v5M45 44v5" stroke="#2c3a41" stroke-width=".5"/>
<circle cx="8.500" cy="54.500" r="4" fill="#cc3d3d"/><circle cx="8.500" cy="54.500" r="2" fill="#3d1515"/><circle cx="16" cy="52.500" r="2.400" fill="#2a373c" stroke="#c3cccf" stroke-width=".6"/>
<rect x="21" y="50" width="7" height="5" fill="#cc9a7a"/><rect x="30" y="50" width="6" height="5" fill="#66767c"/><rect x="37" y="50" width="7" height="5" fill="#66767c"/><rect x="46" y="50" width="7" height="5" fill="#66767c"/>
<rect x="20" y="60" width="34" height="23" fill="#0c1316"/><path d="M20 67H40M20 74H46M20 81H37" stroke="#aab4b8" stroke-width=".7"/><rect x="38" y="65" width="2" height="3" fill="#d6dcde"/><rect x="44" y="72" width="2" height="3" fill="#d6dcde"/><rect x="36" y="79" width="2" height="3" fill="#d6dcde"/>
<text x="46" y="65.500" class="r" style="font-size:3.600px">-8.48</text><text x="33" y="72" class="r" style="font-size:3.600px">0.00</text><text x="47" y="80" class="r" style="font-size:3.600px">0.00</text><text x="12" y="65.500" class="r" style="font-size:3.400px">vol</text><text x="12" y="73" class="r" style="font-size:3.400px">pan</text><text x="12" y="80" class="r" style="font-size:3.400px">dly</text>
<rect x="3" y="86.500" width="51" height="6" fill="#0a1013"/><text x="10" y="91" class="r">Stereo In</text>
<rect x="3" y="93" width="51" height="5.500" fill="#0a1013"/><text x="10" y="97.500" class="r">Outlets</text>
<rect x="3" y="106" width="52" height="7.500" rx="2" fill="url(#btn)"/><text x="6" y="111.500" style="fill:#3a484e">Chord Track</text>
<rect x="3" y="116" width="46" height="7.500" rx="2" fill="url(#btn)"/><text x="6" y="121.500" style="fill:#3a484e">Inserts</text><circle cx="50.500" cy="119.500" r="4" fill="#4a8fe0"/>
<rect x="4" y="126.500" width="50" height="85" fill="#1c272c"/>
<rect x="5" y="128" width="48" height="9.500" fill="url(#slot)"/><text x="6" y="132.500" style="fill:#e6eef2">VST Amp Rack</text>
<path d="M5 150.500H53M5 161.500H53M5 173H53M5 184.500H53M5 196H53M5 138.500H53" stroke="#37454b" stroke-width=".8"/>
<rect x="3" y="222" width="46" height="7" rx="2" fill="url(#btn)"/><text x="6" y="227" style="fill:#3a484e">Strip</text><circle cx="50.500" cy="225.500" r="3.800" fill="#4a8fe0"/>
<rect x="4" y="231.500" width="50" height="68" fill="#1c272c"/>
<rect x="5" y="233" width="48" height="10" fill="url(#slot)"/><text x="6" y="238" style="fill:#e6eef2">Noise Gate</text>
<rect x="5" y="244.500" width="48" height="10" fill="url(#slot)"/><text x="6" y="249.500" style="fill:#e6eef2">Tube Compressor</text>
<rect x="5" y="256" width="48" height="10" fill="url(#grn)"/><text x="6" y="261" style="fill:#e6eef2">EQ Plugin</text>
<rect x="5" y="267" width="48" height="10" fill="url(#slot)"/><text x="6" y="272" style="fill:#e6eef2">EnvelopeShaper</text>
<rect x="5" y="278.500" width="48" height="10" fill="url(#slot)"/><text x="6" y="283.500" style="fill:#e6eef2">Tape Saturation</text>
<text x="6" y="294" class="r">Limit</text>
<rect x="3" y="304" width="46" height="7.500" rx="2" fill="url(#btn)"/><text x="6" y="309.500" style="fill:#3a484e">Equalizers</text><circle cx="50.500" cy="307.500" r="4.500" fill="#47c45a"/>
<rect x="3" y="314" width="46" height="7.500" rx="2" fill="url(#btn)"/><text x="6" y="319.500" style="fill:#3a484e">Sends</text><circle cx="50.500" cy="317.500" r="3.800" fill="#4a8fe0"/>
<rect x="3" y="324" width="46" height="7.500" rx="2" fill="url(#btn)"/><text x="6" y="329.500" style="fill:#3a484e">Channel</text><circle cx="50.500" cy="327.500" r="3.500" fill="#47a05a"/>
<rect x="4" y="333" width="50" height="141" fill="#34444b"/>
<rect x="10" y="336" width="36" height="6" fill="#0f1619"/><rect x="35.500" y="336" width="1.500" height="6" fill="#b8c2c6"/>
<rect x="11" y="345" width="17" height="6" fill="#768489"/><rect x="28" y="345" width="17" height="6" fill="#6a797e"/><text x="17.500" y="350" style="fill:#20292d">M</text><text x="35" y="350" style="fill:#20292d">S</text>
<rect x="11" y="351.500" width="17" height="6" fill="#5c6b71"/><rect x="28" y="351.500" width="17" height="6" fill="#5c6b71"/>
<rect x="15" y="364" width="5" height="68" fill="#1a2327"/>
<rect x="12" y="385" width="6.500" height="13" fill="#c6d0e0"/><rect x="12" y="390.500" width="6.500" height="1.500" fill="#f5f7fa"/>
<path d="M22 365h5M22 372h5M22 379h5M22 386h5M22 393h5M22 400h5M22 407h5M22 414h5M22 421h5M22 428h5" stroke="#8c989d" stroke-width=".5"/>
<rect x="30" y="361" width="14" height="70" fill="#0a1013"/>
<rect x="30" y="387" width="7" height="44" fill="url(#meter)"/><rect x="37" y="379" width="7" height="52" fill="url(#meter)"/>
<rect x="11" y="435" width="34" height="6" fill="#141c20"/><text x="16" y="439.500" class="r" style="font-size:3.600px">-8.48</text><text x="36" y="439.500" class="r" style="font-size:3.600px">7.5</text>
<rect x="11" y="443" width="17" height="6" fill="#75848a"/><rect x="28" y="443" width="17" height="6" fill="#75848a"/><text x="18" y="448" style="fill:#20292d">R</text><text x="35" y="448" style="fill:#20292d">W</text>
<rect x="11" y="450" width="17" height="6" fill="#5c6b71"/><rect x="28" y="450" width="17" height="6" fill="#da3a30"/>
<rect x="41" y="458" width="3.500" height="3.500" fill="#aab4b8"/>
<rect x="10" y="464" width="36" height="8" fill="#bfc8cb"/><text x="12" y="469.500" style="fill:#2b363b">Tale GTR 2 Dry</text>
<rect x="3" y="477" width="51" height="6" rx="2" fill="url(#btn)"/><text x="5" y="482" style="fill:#3a484e">Notepad</text>

<rect y="483" width="870" height="7" fill="#000"/>
<rect width="870" height="8" fill="#000"/>
</svg>
</body></html>
